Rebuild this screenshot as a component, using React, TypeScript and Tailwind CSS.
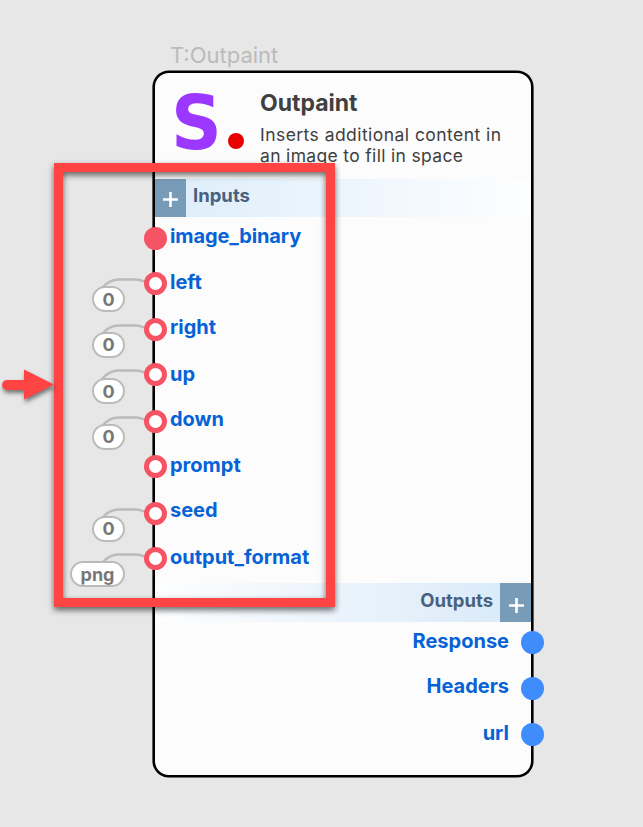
import React from 'react';

type Input = { name: string; row: string; label: string; value?: string; pill?: string };

const inputs: Input[] = [
  { name: 'image_binary', row: 'h-[45px]', label: '-mt-px tracking-[-0.13px]' },
  { name: 'left', row: 'h-[46px]', label: '', value: '0', pill: 'top-[14px] w-[33px] pt-px' },
  { name: 'right', row: 'h-[45px]', label: '-mt-px', value: '0', pill: 'top-[14px] w-[33px]' },
  { name: 'up', row: 'h-[47px]', label: 'mt-px', value: '0', pill: 'top-[15px] w-[33px] pt-px' },
  { name: 'down', row: 'h-[45px]', label: '-mt-px', value: '0', pill: 'top-[14px] w-[33px]' },
  { name: 'prompt', row: 'h-[47px]', label: '' },
  { name: 'seed', row: 'h-[45px]', label: '-mt-0.5', value: '0', pill: 'top-[14px] w-[33px]' },
  { name: 'output_format', row: 'h-[36px]', label: '', value: 'png', pill: 'top-[14px] w-[55px] pt-[2px]' },
];

const outputs = [
  { name: 'Response', row: 'h-[46px]', label: '' },
  { name: 'Headers', row: 'h-[46px]', label: '-mt-px' },
  { name: 'url', row: 'h-[45px]', label: '' },
];

function Plus() {
  return (
    <svg width="15" height="15" viewBox="0 0 15 15" stroke="#fff" strokeWidth="2.6">
      <path d="M0 7.5H15M7.5 0V15" />
    </svg>
  );
}

function InputRow({ name, row, label, value, pill }: Input) {
  return (
    <div className={`relative flex items-start pl-[15px] ${row}`}>
      {value && (
        <>
          <svg className="absolute left-[-55px] top-[6px]" width="50" height="12" fill="none" stroke="#bbb" strokeWidth="2.3">
            <path d="M2 10C7 4 12 1.500 19 1.500H36C40 1.500 43 3 46 4" />
          </svg>
          <span className={`absolute right-[406px] flex h-[26px] items-center justify-center rounded-full border-2 border-[#bbb] bg-white text-[18px] leading-none font-bold text-[#777] ${pill}`}>
            {value}
          </span>
        </>
      )}
      <span className={`absolute left-[-11px] top-0 size-[23px] rounded-full border-[#f65365] ${value || name === 'prompt' ? 'border-[5px] bg-white' : 'bg-[#f65365]'}`} />
      <span className={`text-[20px] leading-[20px] font-bold text-[#0662d6] ${label}`}>{name}</span>
    </div>
  );
}

export default function App() {
  return (
    <main className="relative h-[827px] w-[643px] overflow-hidden bg-[#e7e7e7] pt-[43px] pl-[153px] font-['Inter',sans-serif]">
      <div className="h-[28px] pl-[17px] text-[22px] leading-[25px] text-[#bbb]">T:Outpaint</div>
      <section className="flex h-[706px] w-[380px] flex-col rounded-[16px] border-2 border-black bg-[#fcfcfc] shadow-[0_0_0_0.6px_#000]">
        <header className="flex h-[106px] shrink-0 pl-[18px]">
          <div className="relative w-[87px] shrink-0">
            <span className="absolute left-[-2px] top-[13px] origin-left scale-x-[0.94] font-['DejaVu_Sans',sans-serif] text-[75px] leading-[75px] font-bold text-[#9b37ff]">S</span>
            <span className="absolute left-[55px] top-[60px] size-[16px] rounded-full bg-[#e80000]" />
          </div>
          <div className="pt-[17px] text-[#404040]">
            <h1 className="text-[23px] leading-[27px] font-bold">Outpaint</h1>
            <p className="mt-[7px] text-[17.5px] leading-[21px] tracking-[0.45px] whitespace-nowrap">
              Inserts additional content in
              <br />
              <span className="tracking-[0.33px]">an image to fill in space</span>
            </p>
          </div>
        </header>
        <div className="flex h-[38px] shrink-0 bg-linear-to-r from-[#dcedfa] to-[#fdfeff]">
          <span className="flex w-[31px] items-center justify-center bg-[#789bb7] pt-[2px]"><Plus /></span>
          <h2 className="pt-[6px] pl-[7px] text-[18.5px] leading-[20px] font-bold text-[#48617e]">Inputs</h2>
        </div>
        <div className="mt-[10px] shrink-0">
          {inputs.map((i) => <InputRow key={i.name} {...i} />)}
        </div>
        <div className="flex h-[39px] shrink-0 justify-end bg-linear-to-l from-[#d8e9f8] to-[#fdfeff]">
          <h2 className="pt-[7px] pr-[7px] text-[18.5px] leading-[20px] font-bold text-[#48617e]">Outputs</h2>
          <span className="flex w-[31px] items-center justify-center bg-[#789bb7] pt-[5px] pl-px"><Plus /></span>
        </div>
        <div className="mt-[9px] shrink-0">
          {outputs.map((o) => (
            <div key={o.name} className={`relative flex items-start justify-end pr-[22px] ${o.row}`}>
              <span className={`text-[20px] leading-[20px] font-bold text-[#0662d6] ${o.label}`}>{o.name}</span>
              <span className="absolute right-[-13px] top-0 size-[23px] rounded-full bg-[#3f8cfc]" />
            </div>
          ))}
        </div>
      </section>
      <div className="absolute left-[54px] top-[163px] h-[444px] w-[281px] border-9 border-[#ff4444] drop-shadow-[0_3px_3px_rgba(0,0,0,0.6)]" />
      <svg className="absolute left-0 top-[364px] drop-shadow-[1px_3px_2px_rgba(0,0,0,0.5)]" width="56" height="42" fill="#ff4444">
        <path d="M7 16H24V5.500L54 20.500L24 35.500V26H7A5 5 0 0 1 7 16Z" />
      </svg>
    </main>
  );
}
